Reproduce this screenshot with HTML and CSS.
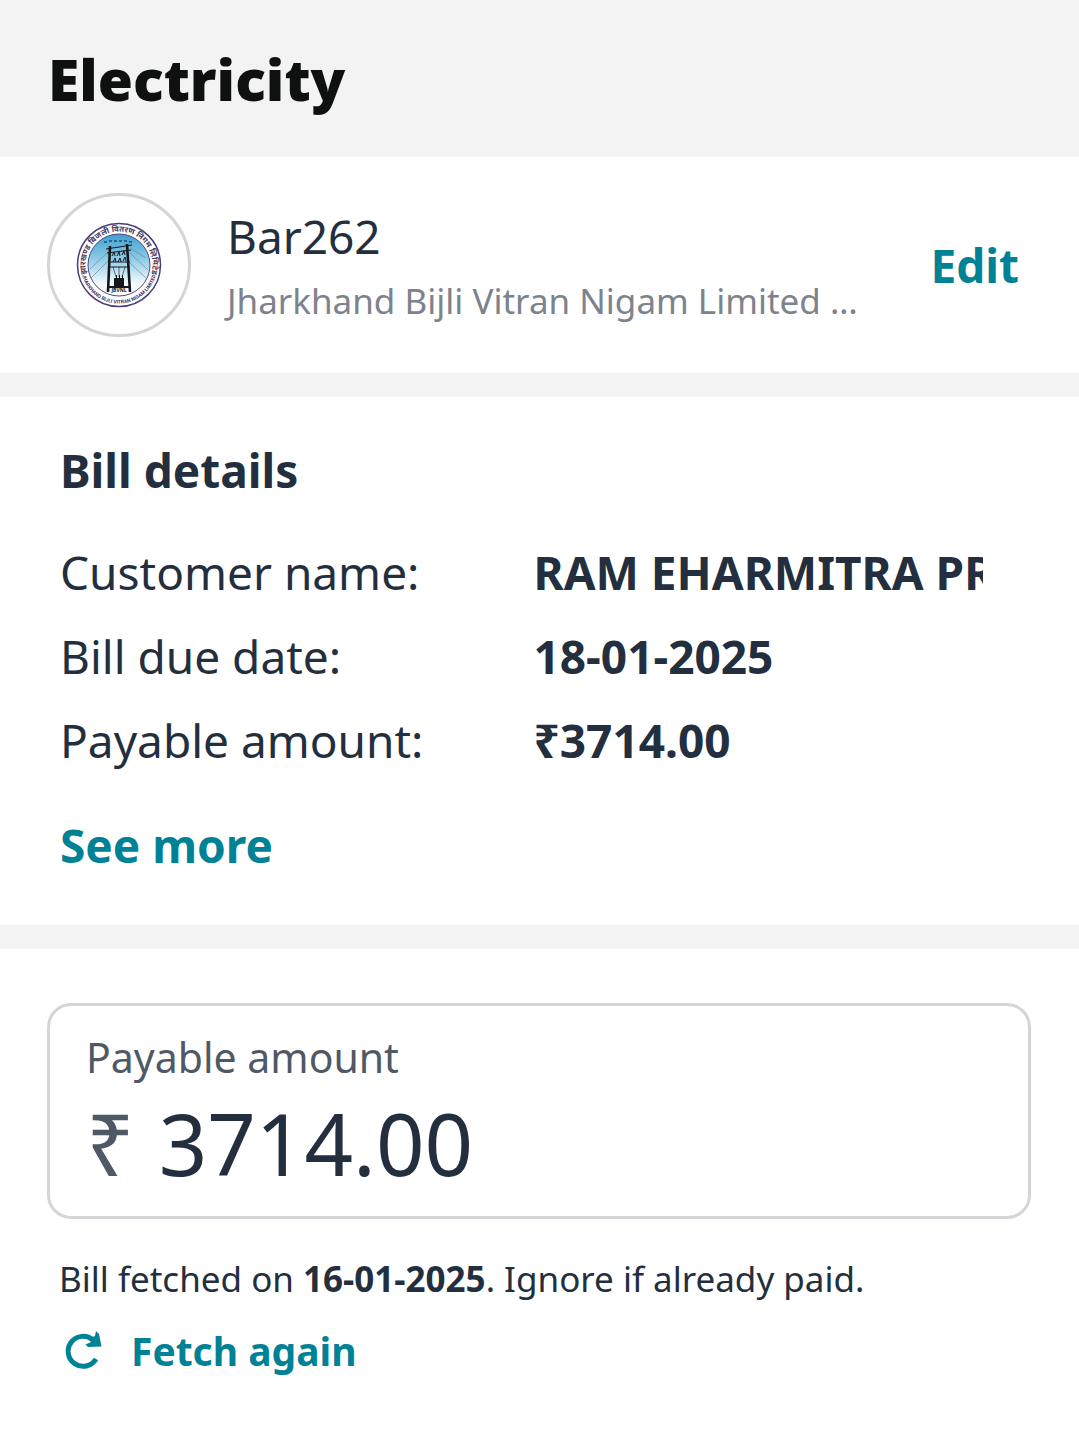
FILE: index.html
```html
<!DOCTYPE html>
<html lang="en">
<head>
    <meta charset="UTF-8">
    <meta name="viewport" content="width=device-width, initial-scale=1.0">
    <title>Electricity</title>

    <link rel="stylesheet" href="styles.css">
</head>
<body>

    <header class="page-header">
        <h1>Electricity</h1>
    </header>

    <main>
        <section class="biller">
            <div class="biller-logo">
                <svg viewBox="0 0 100 100" width="100" height="100" role="img" aria-label="Jharkhand Bijli Vitran Nigam Limited">
                    <defs>
                        <linearGradient id="sky" x1="0" y1="0" x2="0" y2="1">
                            <stop offset="0" stop-color="#3d9fd0"/>
                            <stop offset="0.35" stop-color="#82c5e4"/>
                            <stop offset="0.8" stop-color="#f4fafd"/>
                            <stop offset="1" stop-color="#ffffff"/>
                        </linearGradient>
                        <path id="arcTop" d="M19.6 64.2 A33.5 33.5 0 1 1 80.4 64.2"/>
                        <path id="arcBottom" d="M12.1 53.3 A38 38 0 0 0 87.9 53.3"/>
                    </defs>
                    <circle cx="50" cy="50" r="41.5" fill="#fff" stroke="#4a3c78" stroke-width="1.5"/>
                    <circle cx="50" cy="50" r="31" fill="url(#sky)" stroke="#51487c" stroke-width="1"/>

                    <!-- rings of text -->
                    <text class="logo-hindi"><textPath href="#arcTop" startOffset="50%" text-anchor="middle">झारखण्ड बिजली वितरण निगम लिमिटेड</textPath></text>
                    <text class="logo-english"><textPath href="#arcBottom" startOffset="50%" text-anchor="middle">JHARKHAND BIJLI VITRAN NIGAM LIMITED</textPath></text>
                    <circle cx="13" cy="54" r="1" fill="#c8553d"/>
                    <circle cx="87" cy="54" r="1" fill="#c8553d"/>
                    <path d="M35 27h3M40 26h3M45 26h3M50 26h3M55 26h3M60 27h3" stroke="#28688c" stroke-width="2"/>

                    <!-- wires -->
                    <path d="M39 37L21 54M40 45L22 63M61 33L77 43M61 38L79 55M61 48L77 63" stroke="#68899c" stroke-width="0.7" fill="none"/>

                    <!-- pylon -->
                    <g stroke="#14181c" fill="none">
                        <path d="M41 31L39 77M58 29L61 77" stroke-width="2.6"/>
                        <path d="M37 34L63 30M38 38L62 35M39 47H61M39 52H61" stroke-width="1.2"/>
                        <path d="M43 41l2-4 1 4M48 41l2-4 1 4M53 40l2-4 1 4M44 47l2-4 1 4M49 47l2-4 1 4M54 46l2-4 1 4" stroke-width="1"/>
                        <path d="M44 52L47 62M50 52V62M56 52L53 62" stroke-width="0.6"/>
                        <path d="M39 72H61" stroke-width="2"/>
                    </g>
                    <path d="M45 63h2v-3h1v3h2v-3h1v3h2v-3h1v3h1v8H45z" fill="#14181c"/>
                    <text class="logo-initials" x="50" y="77" text-anchor="middle">JBVNL</text>
                </svg>
            </div>
            <div class="biller-info">
                <p class="biller-name">Bar262</p>
                <p class="biller-board">Jharkhand Bijli Vitran Nigam Limited …</p>
            </div>
            <a class="link" href="#">Edit</a>
        </section>

        <section class="bill">
            <h2>Bill details</h2>
            <dl class="bill-list">
                <dt>Customer name:</dt>
                <dd>RAM EHARMITRA PR</dd>
                <dt>Bill due date:</dt>
                <dd>18-01-2025</dd>
                <dt>Payable amount:</dt>
                <dd>₹3714.00</dd>
            </dl>
            <button type="button" class="link">See more</button>
        </section>

        <section class="payment">
            <div class="amount-box">
                <label for="amount">Payable amount</label>
                <div class="amount-row">
                    <span class="currency">₹</span>
                    <input type="text" id="amount" name="amount" inputmode="decimal" value="3714.00">
                </div>
            </div>
            <p class="note">Bill fetched on <strong>16-01-2025</strong>. Ignore if already paid.</p>
            <button type="button" class="link fetch">
                <svg viewBox="0 0 48 48" width="48" height="48" aria-hidden="true">
                    <path d="M37 32A15 15 0 1 1 34 13" fill="none" stroke="#008296" stroke-width="5"/>
                    <path d="M37 4L40 7 42.500 19.500 29 20 26.500 17.500 32 15 31 11 36 9z" fill="#008296"/>
                </svg>
                Fetch again
            </button>
        </section>
    </main>

</body>
</html>
```
FILE: styles.css
```css
* {
    box-sizing: border-box;
}

body {
    margin: 0;
    background-color: #fff;
    color: #232f3e;
    font-family: "Noto Sans", sans-serif;
    font-size: 46px;
    line-height: 60px;
}

h1, h2, p, dl, dd {
    margin: 0;
}

.page-header {
    padding: 39px 48px 38px;
    background-color: #f3f3f3;
}

h1 {
    color: #0f1111;
    font-size: 57px;
    font-weight: 900;
    line-height: 80px;
}

.link {
    padding: 0;
    border: 0;
    background: none;
    color: #008296;
    font-family: inherit;
    font-size: 46px;
    font-weight: 700;
    line-height: 60px;
    text-decoration: none;
    cursor: pointer;
}

/* Biller */
.biller {
    display: flex;
    align-items: center;
    gap: 36px;
    padding: 36px 60px 36px 47px;
    border-bottom: 24px solid #f3f3f3;
}

.biller-logo {
    display: flex;
    flex: none;
    align-items: center;
    justify-content: center;
    width: 144px;
    height: 144px;
    border: 3px solid #d5d5d9;
    border-radius: 50%;
}

.logo-hindi {
    fill: #4b3b62;
    font-family: "Noto Sans", "Noto Sans Devanagari", sans-serif;
    font-size: 8px;
    font-weight: 700;
}

.logo-english {
    fill: #40366e;
    font-family: Roboto, sans-serif;
    font-size: 5px;
    font-weight: 700;
}

.logo-initials {
    fill: #14181c;
    font-size: 5px;
    font-weight: 700;
}

.biller-info {
    display: flex;
    flex: 1;
    flex-direction: column;
    gap: 11px;
    min-width: 0;
}

.biller-board {
    color: #7d838c;
    font-size: 35px;
    line-height: 48px;
}

/* Bill details */
.bill {
    padding: 37px 60px 50px;
    border-bottom: 24px solid #f3f3f3;
}

h2 {
    font-size: 46px;
    line-height: 72px;
}

.bill-list {
    display: grid;
    grid-template-columns: 1fr 1fr;
    margin: 24px 0 33px;
    padding-right: 12px;
    line-height: 84px;
}

.bill-list dd {
    overflow: hidden;
    margin-right: 24px;
    font-weight: 700;
    white-space: nowrap;
}

.bill .link {
    display: block;
}

/* Payment */
.payment {
    padding: 54px 48px 48px 47px;
}

.amount-box {
    padding: 27px 36px 25px;
    border: 3px solid #d5d5d9;
    border-radius: 24px;
}

.amount-box label {
    display: block;
    color: #4f5966;
    font-size: 41px;
    line-height: 48px;
}

.amount-row {
    display: flex;
    gap: 24px;
    margin-top: 14px;
    font-size: 85px;
    line-height: 96px;
}

.currency {
    color: #4f5966;
}

.amount-row input {
    flex: 1;
    min-width: 0;
    height: 96px;
    padding: 0;
    border: 0;
    outline: 0;
    background: none;
    color: inherit;
    font: inherit;
}

.note {
    padding: 0 12px;
    margin-top: 36px;
    font-size: 35px;
    line-height: 48px;
}

.fetch {
    display: flex;
    align-items: center;
    gap: 24px;
    margin: 20px 12px 0;
    font-size: 39px;
    line-height: 56px;
}
```
